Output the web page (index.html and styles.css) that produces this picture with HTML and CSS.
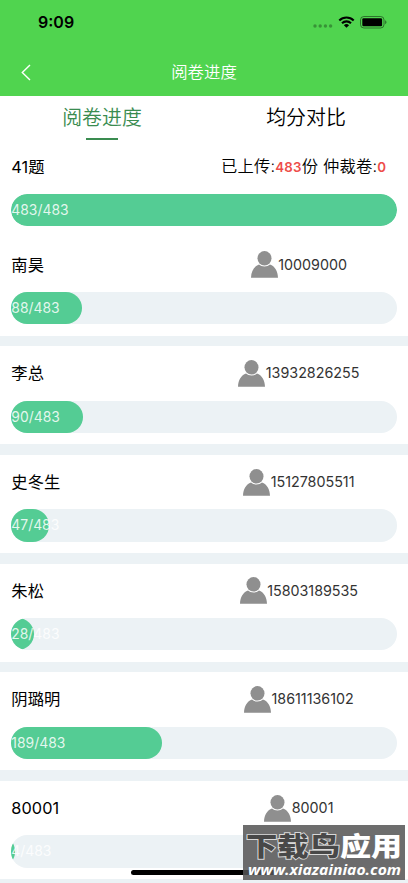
FILE: index.html
```html
<!DOCTYPE html>
<html lang="zh-CN">
<head>
<meta charset="utf-8">
<meta name="viewport" content="width=device-width, initial-scale=1">
<title>阅卷进度</title>
<link rel="stylesheet" href="styles.css">
</head>
<body>
<svg class="defs" width="0" height="0" aria-hidden="true">
  <symbol id="person" viewBox="0 0 27 27">
    <path d="M8 13.6C3.2 15.3.2 20 0 26.7h27C26.8 20 23.8 15.3 19 13.6c-1.4 1.300-3.300 2-5.500 2s-4.100-.7-5.500-2z"/>
    <ellipse cx="13.500" cy="7.300" rx="7" ry="7.300"/>
  </symbol>
</svg>
<header class="header">
  <div class="status">
    <span class="time">9:09</span>
    <div class="signals">
      <svg class="dots" viewBox="0 0 20 4"><circle cx="2" cy="2" r="1.7"/><circle cx="7.200" cy="2" r="1.7"/><circle cx="12.400" cy="2" r="1.7"/><circle cx="17.600" cy="2" r="1.7"/></svg>
      <svg class="wifi" viewBox="0 0 17 12"><path d="M1.300 4.500a10.300 10.300 0 0 1 14.400 0M4 7.200a6.500 6.500 0 0 1 9 0" fill="none" stroke="#000" stroke-width="2.100"/><path d="M8.500 11.800 5.900 9.200a3.800 3.800 0 0 1 5.200 0z"/></svg>
      <svg class="battery" viewBox="0 0 27 13"><rect x=".5" y=".5" width="23.500" height="11.500" rx="3.400" fill="none" stroke="#000" stroke-opacity=".45"/><rect x="2.300" y="2.200" width="19.800" height="8.100" rx="1.200"/><path d="M25.200 4.300c1.700.6 1.700 3.300 0 3.900z" opacity=".5"/></svg>
    </div>
  </div>
  <nav class="navbar">
    <svg class="back" viewBox="0 0 10 17"><path d="M9 1 1.300 8.500 9 16"/></svg>
    <h1 class="title">阅卷进度</h1>
  </nav>
</header>
<div class="tabs">
  <div class="tab active">阅卷进度</div>
  <div class="tab">均分对比</div>
</div>
<main class="list">
  <section class="card summary">
    <div class="row"><span class="name">41题</span><span class="totals">已上传:<b>483</b>份 仲裁卷:<b>0</b></span></div>
    <div class="track"><div class="fill" style="margin-left:0%"></div><span class="count">483/483</span></div>
  </section>
  <section class="card">
    <div class="row"><span class="name">南昊</span><span class="user"><svg class="person"><use href="#person"/></svg>10009000</span></div>
    <div class="track"><div class="fill" style="margin-left:-81.78%"></div><span class="count">88/483</span></div>
  </section>
  <section class="card">
    <div class="row"><span class="name">李总</span><span class="user"><svg class="person"><use href="#person"/></svg>13932826255</span></div>
    <div class="track"><div class="fill" style="margin-left:-81.37%"></div><span class="count">90/483</span></div>
  </section>
  <section class="card">
    <div class="row"><span class="name">史冬生</span><span class="user"><svg class="person"><use href="#person"/></svg>15127805511</span></div>
    <div class="track"><div class="fill" style="margin-left:-90.27%"></div><span class="count">47/483</span></div>
  </section>
  <section class="card">
    <div class="row"><span class="name">朱松</span><span class="user"><svg class="person"><use href="#person"/></svg>15803189535</span></div>
    <div class="track"><div class="fill" style="margin-left:-94.2%"></div><span class="count">28/483</span></div>
  </section>
  <section class="card">
    <div class="row"><span class="name">阴璐明</span><span class="user"><svg class="person"><use href="#person"/></svg>18611136102</span></div>
    <div class="track"><div class="fill" style="margin-left:-60.87%"></div><span class="count">189/483</span></div>
  </section>
  <section class="card">
    <div class="row"><span class="name">80001</span><span class="user"><svg class="person"><use href="#person"/></svg>80001</span></div>
    <div class="track"><div class="fill" style="margin-left:-99.17%"></div><span class="count">4/483</span></div>
  </section>
</main>
<div class="home-bar"></div>
<div class="watermark">
  <svg viewBox="0 0 162 55">
    <g class="mark-cn">
      <text class="outlined" x="3" y="31" textLength="94" lengthAdjust="spacingAndGlyphs">下载鸟</text>
      <text class="solid" x="97" y="31" textLength="62" lengthAdjust="spacingAndGlyphs">应用</text>
    </g>
    <text class="mark-url" x="5" y="50" textLength="153" lengthAdjust="spacingAndGlyphs">www.xiazainiao.com</text>
  </svg>
</div>
</body>
</html>
```

FILE: styles.css
```css
* { box-sizing: border-box; }
body {
  margin: 0;
  height: 883px;
  overflow: hidden;
  position: relative;
  background: #ecf2f5;
  color: #000;
  font-family: Inter, "Noto Sans CJK SC", sans-serif;
}
.defs { position: absolute; }
.header { height: 96px; background: #50d44f; }
.status {
  height: 48px;
  padding: 0 21px 4px 38px;
  display: flex;
  align-items: center;
  justify-content: space-between;
}
.time { font-size: 16px; font-weight: 600; line-height: 20px; }
.signals { display: flex; align-items: center; gap: 5px; }
.dots { width: 20px; height: 4px; opacity: .3; margin-top: 8px; }
.wifi { width: 17px; height: 12px; }
.battery { width: 27px; height: 13px; }
.navbar {
  height: 48px;
  display: grid;
  grid-template-columns: 40px 1fr 40px;
  align-items: center;
}
.back {
  width: 10px;
  height: 17px;
  margin-left: 21px;
  fill: none;
  stroke: #fff;
  stroke-width: 1.4;
}
.title {
  margin: 0;
  text-align: center;
  font-size: 16.400px;
  font-weight: 350;
  line-height: 24px;
  color: #fff;
}
.tabs { height: 43.600px; display: flex; background: #fff; }
.tab {
  flex: 1;
  display: flex;
  flex-direction: column;
  align-items: center;
  padding-top: 2px;
  font-size: 19.900px;
  font-weight: 350;
  line-height: 40px;
}
.tab.active { color: #3a8c50; }
.tab.active::after { content: ""; width: 32px; height: 1.600px; background: #3a8c50; }
.list { display: flex; flex-direction: column; gap: 10.670px; }
.card { height: 98px; padding: 0 11.300px 11.300px; background: #fff; flex: none; }
.summary { margin-bottom: -10.670px; }
.row {
  height: 54.300px;
  display: grid;
  grid-template-columns: 1fr 1fr;
  align-items: center;
  font-size: 16.300px;
  font-weight: 400;
  line-height: 24px;
}
.summary .row { grid-template-columns: auto auto; justify-content: space-between; }
.totals { font-weight: 350; }
.name { letter-spacing: .1px; }
.totals { padding-right: 10.500px; letter-spacing: .2px; }
.totals b { color: #ee4d4a; font-size: 13.300px; font-weight: 600; }
.user {
  display: flex;
  align-items: center;
  justify-content: center;
  padding-right: 3px;
  font-size: 14.300px;
  color: #333;
}
.person { width: 27px; height: 27px; fill: #8f8f8f; margin-right: .5px; flex: none; }
.track {
  height: 32.400px;
  display: grid;
  align-items: center;
  border-radius: 16.200px;
  background: #ecf2f5;
  overflow: hidden;
}
.fill, .count { grid-area: 1 / 1; }
.fill { width: 100%; height: 100%; border-radius: 16.200px; background: #54cc94; }
.count { color: rgba(255, 255, 255, .85); font-size: 13.900px; line-height: 20px; }
.home-bar {
  position: absolute;
  left: 131px;
  top: 870px;
  width: 146px;
  height: 5px;
  border-radius: 3px;
  background: #000;
}
.watermark {
  position: absolute;
  left: 243px;
  top: 825px;
  width: 162px;
  height: 55px;
  background: rgba(85, 85, 85, .86);
}
.watermark svg { display: block; width: 162px; height: 55px; }
.mark-cn { font-family: "Noto Sans CJK SC", sans-serif; font-size: 26.500px; font-weight: 900; }
.outlined { fill: #484848; stroke: #d8d8d8; stroke-width: 1.8px; paint-order: stroke; }
.solid { fill: #fff; }
.mark-url { fill: #fff; font-family: "Open Sans", "Noto Sans", sans-serif; font-size: 13.500px; font-weight: 700; font-style: italic; }
```
